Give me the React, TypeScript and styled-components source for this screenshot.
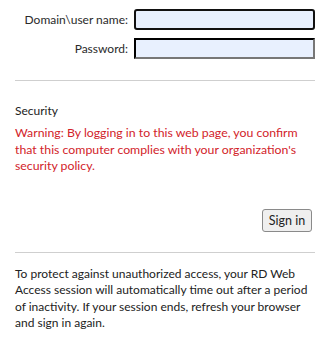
import React from "react";
import styled, { createGlobalStyle } from "styled-components";

const GlobalStyle = createGlobalStyle`
  html, body {
    margin: 0;
    padding: 0;
    background: #ffffff;
  }
  body {
    font-family: "Segoe UI", Lato, "Noto Sans", sans-serif;
    font-size: 12px;
    color: #222;
  }
`;

const Page = styled.div`
  width: 300px;
  padding: 9px 15px 0 15px;
`;

const FieldRow = styled.div`
  display: flex;
  align-items: center;
  justify-content: flex-end;
  gap: 6px;
  margin-bottom: 8px;
`;

const Label = styled.label`
  color: #2a2a2a;
  line-height: 16px;
`;

const Input = styled.input<{ $focused?: boolean }>`
  box-sizing: border-box;
  width: 181px;
  height: 21px;
  margin: 0;
  padding: 0 5px;
  background: #e8f0fe;
  font: inherit;
  outline: none;
  border: 2px solid;
  border-color: ${(p) => (p.$focused ? "#111" : "#222 #777 #777 #222")};
  border-radius: ${(p) => (p.$focused ? "3px" : "0")};
  border-style: ${(p) => (p.$focused ? "solid" : "inset")};
`;

const Divider = styled.hr<{ $top: number }>`
  border: none;
  border-top: 1px solid #cfcfcf;
  margin: ${(p) => p.$top}px 0 0 0;
  height: 0;
`;

const Heading = styled.div`
  margin-top: 22px;
  line-height: 16px;
  color: #222;
`;

const Warning = styled.p`
  margin: 6px 0 0 0;
  font-size: 12.3px;
  line-height: 16.5px;
  color: #d2232a;
`;

const ButtonRow = styled.div`
  display: flex;
  justify-content: flex-end;
  margin-top: 34px;
  padding-right: 3px;
`;

const Button = styled.button`
  box-sizing: border-box;
  height: 23px;
  width: 50px;
  padding: 0;
  font: inherit;
  font-size: 12.5px;
  color: #222;
  background: #efefef;
  border: 1px solid #8a8a8a;
  border-radius: 3px;
`;

const Notice = styled.p`
  margin: 13px 0 0 0;
  line-height: 16.5px;
  color: #222;
`;

export default function App() {
  return (
    <>
      <GlobalStyle />
      <Page>
        <FieldRow>
          <Label htmlFor="user">Domain\user name:</Label>
          <Input id="user" type="text" $focused />
        </FieldRow>
        <FieldRow>
          <Label htmlFor="pass">Password:</Label>
          <Input id="pass" type="password" />
        </FieldRow>
        <Divider $top={21} />
        <Heading>Security</Heading>
        <Warning>
          Warning: By logging in to this web page, you confirm that this computer complies with
          your organization's security policy.
        </Warning>
        <ButtonRow>
          <Button type="button">Sign in</Button>
        </ButtonRow>
        <Divider $top={20} />
        <Notice>
          To protect against unauthorized access, your RD Web Access session will automatically
          time out after a period of inactivity. If your session ends, refresh your browser and
          sign in again.
        </Notice>
      </Page>
    </>
  );
}
